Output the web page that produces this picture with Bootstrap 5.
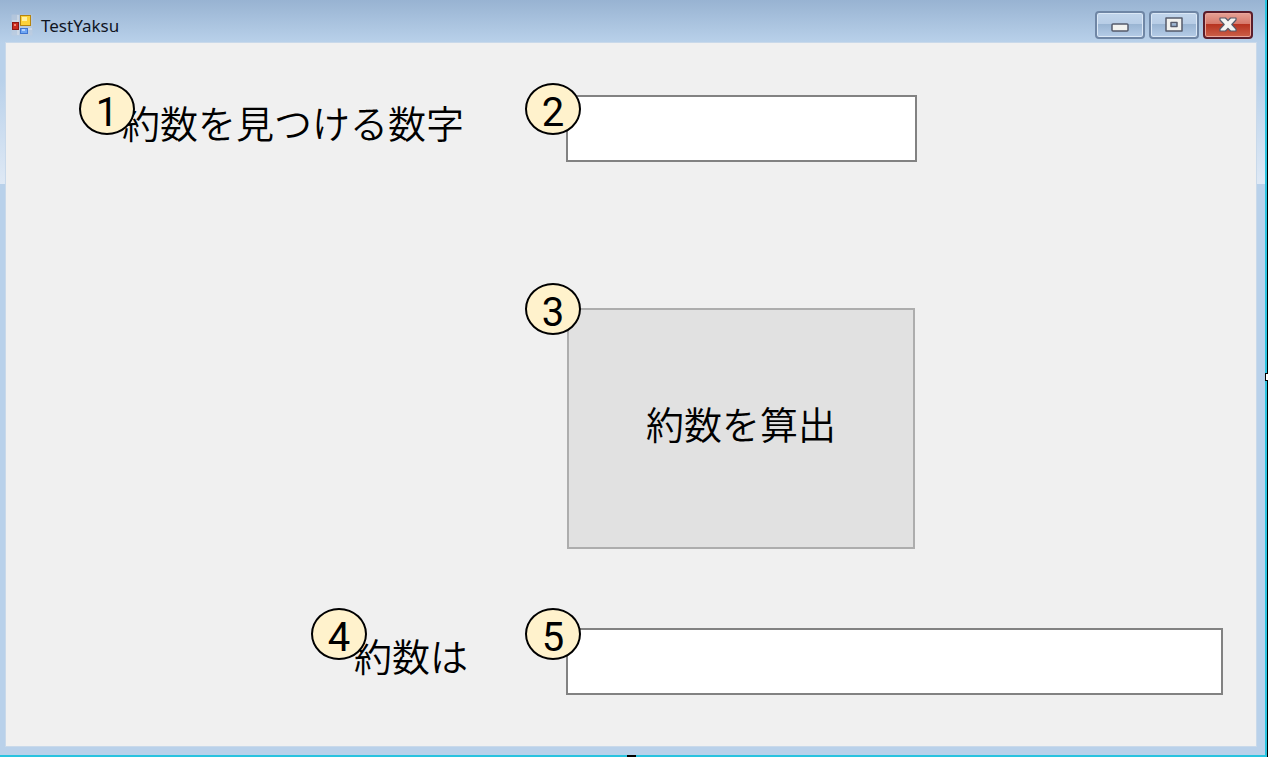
<!DOCTYPE html>
<html lang="ja">
<head>
<meta charset="utf-8">
<meta name="viewport" content="width=device-width, initial-scale=1">
<title>TestYaksu</title>
<link href="https://cdn.jsdelivr.net/npm/bootstrap@5.3.0/dist/css/bootstrap.min.css" rel="stylesheet">
<style>
  body { background: #000; color: #000; font-family: "Noto Sans CJK JP", sans-serif; }
  /* window frame */
  .win {
    border-right: 2px solid #29c3df; border-bottom: 2px solid #29c3df;
    padding: 0 9px 9px 6px; margin-right: 1px;
    background: linear-gradient(#98b3d2 0, #b9d1ea 43px, #b9d1ea 80px, #dfe9f5 184px, #b9d1ea 184px);
  }
  .titlebar { height: 43px; padding: 8px 3px 0 5px; }
  .win-title { font: 17px/24px "Noto Sans", sans-serif; padding-top: 6px; color: #10151f; }
  .app-icon { margin: 6px 8px 0 0; }
  .caption-btn {
    width: 50px; height: 28px; margin-top: 3px; border-radius: 4px; border: 2px solid #6f86a5;
    box-shadow: inset 0 0 0 1px #dbe8f6;
    background: linear-gradient(#c1d5eb 0, #b8cde6 45%, #99b4d2 46%, #b5cce7 100%);
  }
  .caption-close {
    border-color: #5b1d2b; box-shadow: inset 0 0 0 1px #eba69b;
    background: linear-gradient(#e5a195 0, #d7796b 45%, #b7321f 46%, #cb6049 100%);
  }
  .client { background: #f0f0f0; box-shadow: 0 0 0 1px #c9d9ea; padding: 52px 33px 0 0; }
  .form-line { display: grid; grid-template-columns: 560px 1fr; }
  .line-gap-lg { margin-bottom: 146px; }
  .line-gap-md { margin-bottom: 79px; }
  .caption-cell { padding-right: 98px; height: 60px; }
  .big-text { font-size: 38px; line-height: 54px; font-weight: 350; }
  .field {
    height: 67px; border: 2px solid #828282; border-radius: 0; background: #fff; font-size: 38px;
  }
  .mid-width { width: 351px; }
  .calc-btn {
    width: 348px; height: 241px; margin-left: 1px; border: 2px solid #adadad; border-radius: 0;
    background: #e1e1e1; color: #000; padding: 0 0 12px;
  }
  .calc-btn:hover { background: #e5f1fb; color: #000; }
  /* numbered callouts over the controls */
  .callout {
    position: absolute; left: -41px; top: -12px; width: 56px; height: 52px;
    border: 2px solid #000; border-radius: 50%; background: #fff2cc;
    font: 40px/56px Roboto, sans-serif; text-align: center;
  }
  .caption-cell .callout { left: -43px; }
  .lift-md .callout { top: -20px; }
  .lift-lg .callout { top: -25px; }
  .grip-bottom { position: absolute; bottom: 0; left: 50%; width: 9px; height: 2px; margin-left: -7px; background: #000; }
  .grip-right { position: absolute; right: 0; top: 50%; width: 3px; height: 8px; margin-top: -6px; background: #fff; border: 1px solid #000; border-right: 0; }
</style>
</head>
<body>
<div class="position-relative">
<main class="win d-flex flex-column min-vh-100">
  <header class="titlebar d-flex align-items-start">
    <svg class="app-icon" width="22" height="22" viewBox="0 0 22 22" aria-hidden="true">
      <rect x=".5" y=".5" width="21" height="21" fill="#c5cfdb" opacity=".45"/>
      <path d="M7 1v20M1 7h6M1 15h20" stroke="#dfe5ec" fill="none"/>
      <rect x="1.500" y="8.500" width="6" height="7" fill="#c92a1d" stroke="#8d1712"/>
      <rect x="3" y="10" width="2" height="2" fill="#f08a78"/>
      <rect x="9.500" y="1.500" width="10" height="10" fill="#fdd23a" stroke="#b58510"/>
      <rect x="11" y="3" width="5" height="4" fill="#fff0a0"/>
      <rect x="9.500" y="14.500" width="7" height="5" fill="#6ea5f2" stroke="#3f74d0"/>
      <rect x="11" y="15" width="3" height="2" fill="#b5d3ff"/>
    </svg>
    <h1 class="win-title m-0 flex-grow-1">TestYaksu</h1>
    <div class="d-flex gap-1">
      <button type="button" class="caption-btn p-0 d-flex align-items-center justify-content-center" aria-label="最小化">
        <svg width="20" height="16" viewBox="0 0 20 16"><rect x="2" y="7" width="16" height="7" rx="1" fill="#f2f2ef" stroke="#555b6b" stroke-width="1.500"/></svg>
      </button>
      <button type="button" class="caption-btn p-0 d-flex align-items-center justify-content-center" aria-label="最大化">
        <svg width="20" height="16" viewBox="0 0 20 16"><path d="M2 1h16v13H2zM7 5.500v4h6v-4z" fill="#f2f2ef" fill-rule="evenodd" stroke="#555b6b" stroke-width="1.500" stroke-linejoin="round"/></svg>
      </button>
      <button type="button" class="caption-btn caption-close p-0 d-flex align-items-center justify-content-center" aria-label="閉じる">
        <svg width="20" height="16" viewBox="0 0 20 16"><path d="M2 1h5.500L10 3.700 12.500 1H18v2l-4.200 4.500L18 12v2h-5.500L10 11.300 7.500 14H2v-2l4.200-4.500L2 3z" fill="#f4f4f2" stroke="#555b6b" stroke-width="1.200" stroke-linejoin="round"/></svg>
      </button>
    </div>
  </header>

  <form class="client flex-grow-1">
    <div class="form-line line-gap-lg">
      <div class="caption-cell text-end">
        <div class="position-relative d-inline-block me-1">
          <label class="big-text" for="number">約数を見つける数字</label>
          <span class="callout">1</span>
        </div>
      </div>
      <div class="position-relative">
        <input class="form-control field mid-width" id="number" type="text">
        <span class="callout">2</span>
      </div>
    </div>
    <div class="form-line line-gap-md lift-lg">
      <div></div>
      <div class="position-relative">
        <button type="button" class="btn calc-btn big-text">約数を算出</button>
        <span class="callout">3</span>
      </div>
    </div>
    <div class="form-line lift-md">
      <div class="caption-cell text-end">
        <div class="position-relative d-inline-block">
          <label class="big-text" for="divisors">約数は</label>
          <span class="callout">4</span>
        </div>
      </div>
      <div class="position-relative">
        <input class="form-control field" id="divisors" type="text">
        <span class="callout">5</span>
      </div>
    </div>
  </form>
</main>
<span class="grip-bottom"></span>
<span class="grip-right"></span>
</div>
<script src="https://cdn.jsdelivr.net/npm/bootstrap@5.3.0/dist/js/bootstrap.bundle.min.js"></script>
</body>
</html>
